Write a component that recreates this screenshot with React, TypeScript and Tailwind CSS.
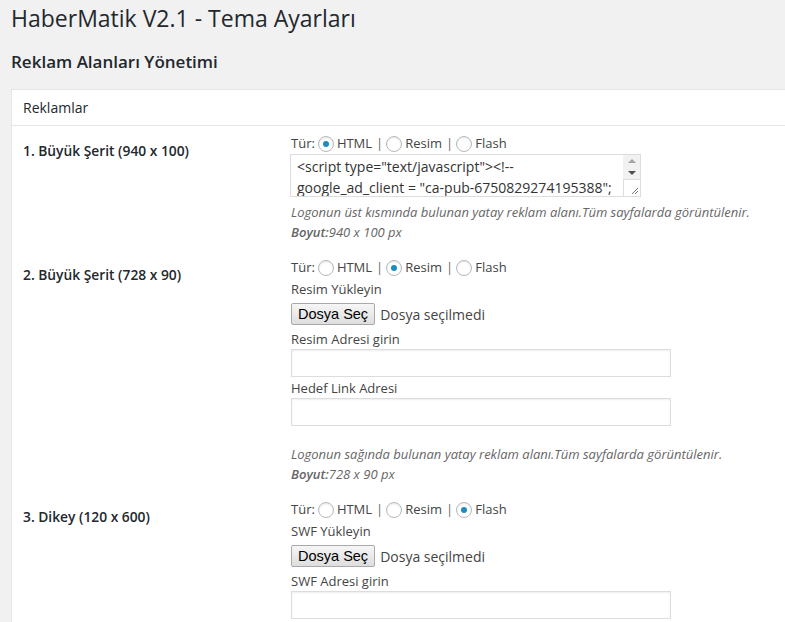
import React from "react";

type Kind = "html" | "resim" | "flash";

function Radio({ checked }: { checked?: boolean }) {
  return (
    <span className="inline-flex h-4 w-4 shrink-0 items-center justify-center rounded-full border border-[#b4b9be] bg-white shadow-[inset_0_1px_2px_rgba(0,0,0,0.1)] mx-[3px]">
      {checked && <span className="h-[6px] w-[6px] rounded-full bg-[#1e8cbe]" />}
    </span>
  );
}

function TypeLine({ active }: { active: Kind }) {
  return (
    <div className="flex h-5 items-center whitespace-nowrap">
      <span>Tür:</span>
      <Radio checked={active === "html"} />
      <span>HTML</span>
      <span className="ml-[4px] text-[#666]">|</span>
      <Radio checked={active === "resim"} />
      <span>Resim</span>
      <span className="ml-[4px] text-[#666]">|</span>
      <Radio checked={active === "flash"} />
      <span>Flash</span>
    </div>
  );
}

function FileButton() {
  return (
    <div className="mt-1 flex items-center gap-[5px] h-[22px]">
      <button className="h-[22px] px-[6px] border border-[#a9a9a9] rounded-[2px] bg-gradient-to-b from-[#f6f6f6] to-[#dedede] font-['Liberation_Sans',Arial,sans-serif] text-[14.5px] leading-none text-black">
        Dosya Seç
      </button>
      <span className="text-[14px] text-[#444]">Dosya seçilmedi</span>
    </div>
  );
}

function TextInput() {
  return <div className="h-[28px] w-[380px] border border-[#ddd] bg-white shadow-[inset_0_1px_2px_rgba(0,0,0,0.07)]" />;
}

function Desc({ text, size }: { text: string; size: string }) {
  return (
    <div className="italic text-[#666] leading-[19.5px] whitespace-nowrap">
      <div>{text}</div>
      <div><span className="font-semibold">Boyut:</span>{size}</div>
    </div>
  );
}

function Row({ label, children }: { label: string; children: React.ReactNode }) {
  return (
    <div className="grid grid-cols-[268px_1fr] pl-[11px]">
      <div className="pt-[15px] text-[13.8px] font-semibold text-[#23282d] leading-5">{label}</div>
      <div className="pt-[8px] pb-[8px]">{children}</div>
    </div>
  );
}

export default function App() {
  return (
    <div className="min-h-screen overflow-hidden bg-[#f1f1f1] font-['Open_Sans',sans-serif] text-[13px] text-[#444] pl-[11px] pt-[4px]">
      <h1 className="text-[23px] leading-[29px] text-[#23282d]">HaberMatik V2.1 - Tema Ayarları</h1>
      <h2 className="mt-[19px] text-[17px] leading-5 font-semibold text-[#23282d]">Reklam Alanları Yönetimi</h2>

      <div className="mt-[17px] w-[900px] border border-[#e5e5e5] bg-white">
        <div className="h-[36px] flex items-center px-[11px] text-[14px] text-[#23282d] border-b border-[#e5e5e5]">
          Reklamlar
        </div>

        <Row label="1. Büyük Şerit (940 x 100)">
          <TypeLine active="html" />
          <div className="-ml-px flex h-[43px] w-[351px] border border-[#ddd] bg-white">
            <div className="flex-1 overflow-hidden px-[6px] pt-[1px] text-[14px] leading-[21px] text-[#333] whitespace-nowrap">
              <div>&lt;script type="text/javascript"&gt;&lt;!--</div>
              <div>google_ad_client = "ca-pub-6750829274195388";</div>
            </div>
            <div className="flex w-[17px] flex-col bg-[#f1f1f1]">
              <div className="flex h-[12px] items-center justify-center">
                <span className="h-0 w-0 border-x-[4px] border-b-[4px] border-x-transparent border-b-[#a3a3a3]" />
              </div>
              <div className="flex h-[12px] items-center justify-center">
                <span className="h-0 w-0 border-x-[4px] border-t-[4px] border-x-transparent border-t-[#505050]" />
              </div>
              <div className="relative flex-1 border-l border-t border-[#ddd] bg-white">
                <svg className="absolute bottom-[1px] right-[1px]" width="8" height="8" viewBox="0 0 8 8">
                  <path d="M1 7 L7 1 M4 7 L7 4" stroke="#777" strokeWidth="1" />
                </svg>
              </div>
            </div>
          </div>
          <div className="mt-[6px]">
            <Desc text="Logonun üst kısmında bulunan yatay reklam alanı.Tüm sayfalarda görüntülenir." size="940 x 100 px" />
          </div>
        </Row>

        <Row label="2. Büyük Şerit (728 x 90)">
          <TypeLine active="resim" />
          <div className="leading-5 mt-px">Resim Yükleyin</div>
          <FileButton />
          <div className="leading-5 mt-1">Resim Adresi girin</div>
          <TextInput />
          <div className="leading-5 mt-px">Hedef Link Adresi</div>
          <TextInput />
          <div className="mt-[19px]">
            <Desc text="Logonun sağında bulunan yatay reklam alanı.Tüm sayfalarda görüntülenir." size="728 x 90 px" />
          </div>
        </Row>

        <Row label="3. Dikey (120 x 600)">
          <TypeLine active="flash" />
          <div className="leading-5 mt-px">SWF Yükleyin</div>
          <FileButton />
          <div className="leading-5 mt-1">SWF Adresi girin</div>
          <TextInput />
        </Row>
      </div>
    </div>
  );
}
